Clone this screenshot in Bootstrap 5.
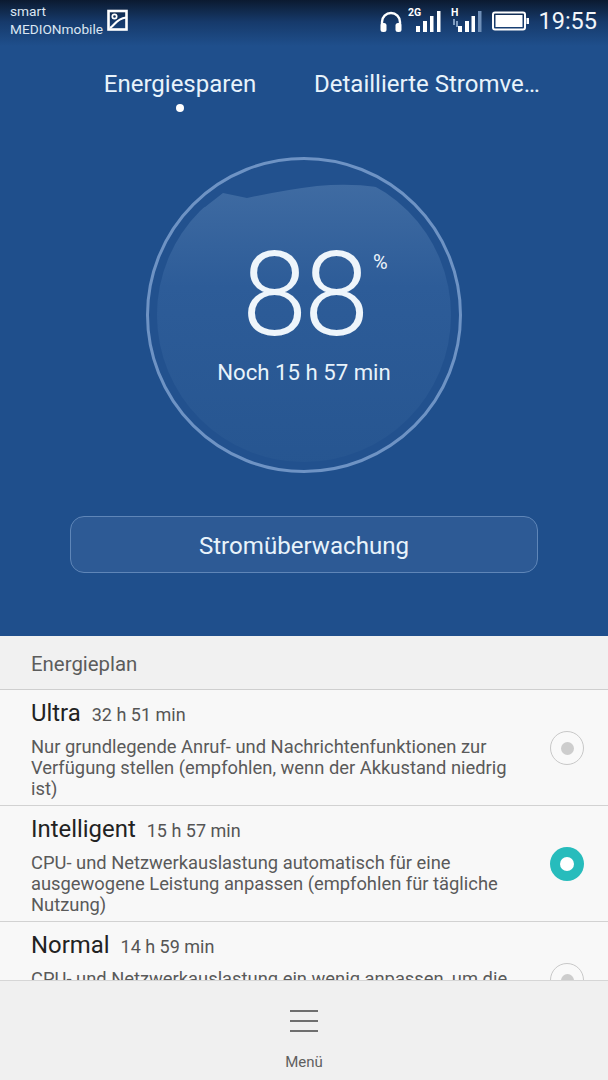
<!DOCTYPE html>
<html lang="de">
<head>
<meta charset="utf-8">
<title>Energiesparen</title>
<link href="https://cdn.jsdelivr.net/npm/bootstrap@5.3.0/dist/css/bootstrap.min.css" rel="stylesheet">
<style>
html,body{margin:0;height:100%;}
body{font-family:Roboto,"Liberation Sans",sans-serif;background:#f6f6f6;}
.phone-page{width:608px;height:1080px;overflow:hidden;}
.blue-top{height:636px;background:linear-gradient(to bottom,#0b1a30 0,#163a6b 22px,#1f4f8c 46px,#1f4f8c 100%);color:#e8f3fb;flex:none;}
.status-row{height:45px;padding:0 11px 0 10px;}
.carrier{font-size:13.7px;line-height:18px;padding-top:2px;color:#dbe6f2;}
.status-time{font-size:23.5px;line-height:24px;color:#f2f6fa;margin:9px 0 0 8px;}
.tab-row{height:69px;padding-top:25px;}
.tab-one{position:relative;width:304px;font-size:24px;line-height:28px;text-align:center;padding-left:56px;}
.tab-two{font-size:24px;line-height:28px;padding-left:10px;white-space:nowrap;}
.tab-dot{position:absolute;left:176px;top:34px;width:8px;height:8px;border-radius:50%;background:#fff;}
.dial{position:relative;width:320px;height:320px;margin:42px auto 0;}
.dial svg{display:block;}
.dial-num{position:absolute;left:0;right:0;top:79px;text-align:center;font-size:117px;line-height:120px;font-weight:300;letter-spacing:-3px;color:#eef5fb;}
.dial-pct{position:absolute;left:229px;top:95px;font-size:20px;line-height:22px;color:#eef5fb;}
.dial-left{position:absolute;left:0;right:0;top:202px;text-align:center;font-size:22.2px;line-height:28px;color:#e8f3fb;}
.monitor-btn{display:block;width:468px;height:57px;margin:40px auto 0;border:1px solid #5f86b8;border-radius:14px;background:#2d5a95;color:#e8f3fb;font-size:24.1px;line-height:59px;padding:0;text-align:center;}
.plan-head{height:54px;background:#f1f1f1;border-bottom:1px solid #cfcfcf;padding:0 31px;font-size:20.4px;line-height:57px;color:#5c5c5c;flex:none;}
.plan-list{flex:1 1 0;overflow:hidden;min-height:0;background:#f8f8f8;}
.plan-row{height:116px;border-bottom:1px solid #d2d2d2;padding:8px 24px 0 31px;}
.plan-title{line-height:30px;white-space:nowrap;}
.plan-name{font-size:23.9px;color:#222;}
.plan-time{font-size:18px;color:#555;margin-left:11px;}
.plan-desc{font-size:18.35px;line-height:21px;color:#5a5a5a;margin-top:5px;width:490px;}
.radio-off,.radio-on{width:34px;height:34px;border-radius:50%;flex:none;display:flex;align-items:center;justify-content:center;margin-top:33px;}
.radio-off{border:1px solid #c8c8c8;background:#f9f9f9;}
.radio-off i{display:block;width:13px;height:13px;border-radius:50%;background:#cdcdcd;}
.radio-on{background:#27bcbc;}
.radio-on i{display:block;width:14px;height:14px;border-radius:50%;background:#fff;}
.foot-bar{height:100px;background:#f0f0f0;border-top:1px solid #d6d6d6;flex:none;text-align:center;}
.menu-lines{display:block;margin:28px auto 0;}
.menu-word{font-size:15px;line-height:20px;color:#5f5f5f;margin-top:19px;}
.ic-head{margin:10px 0 0 0;}
.ic-sig2{margin:5px 0 0 5px;}
.ic-sigh{margin:5px 0 0 9px;}
.ic-bat{margin:11px 0 0 10px;}
</style>
</head>
<body>
<div class="phone-page d-flex flex-column">
  <section class="blue-top">
    <div class="status-row d-flex align-items-start justify-content-between">
      <div class="d-flex">
        <div class="carrier">smart<br>MEDIONmobile</div>
        <svg class="ms-1 mt-2" width="22" height="23" viewBox="0 0 22 23" fill="none" stroke="#fff"><rect x="1.5" y="3" width="18" height="18.5" stroke-width="2.6"/><circle cx="7.5" cy="8.5" r="2.2" stroke-width="1.7"/><path d="M3 20 C8 17 9 11 19 9.5" stroke-width="2.1"/></svg>
      </div>
      <div class="d-flex align-items-start">
        <svg class="ic-head" width="24" height="24" viewBox="0 0 24 24" fill="none"><path d="M3 15 V12 a9 9 0 0 1 18 0 V15" stroke="#fff" stroke-width="2.4"/><rect x="1.5" y="13" width="6" height="9" rx="2.5" fill="#fff"/><rect x="16.5" y="13" width="6" height="9" rx="2.5" fill="#fff"/></svg>
        <svg class="ic-sig2" width="34" height="27" viewBox="0 0 34 27"><text x="0" y="11" font-family="Roboto" font-weight="700" font-size="10.5" fill="#fff">2G</text><rect x="8" y="21" width="4" height="6" fill="#fff"/><rect x="15" y="16" width="4" height="11" fill="#fff"/><rect x="22" y="11" width="3.5" height="16" fill="#fff"/><rect x="29" y="6" width="3.5" height="21" fill="#fff"/></svg>
        <svg class="ic-sigh" width="31" height="27" viewBox="0 0 31 27"><text x="0" y="11" font-family="Roboto" font-weight="700" font-size="10.5" fill="#fff">H</text><path d="M3 14v6M6 22v-6" stroke="#7f9cc0" stroke-width="2"/><rect x="7" y="21" width="4" height="6" fill="#fff"/><rect x="14" y="16" width="4" height="11" fill="#fff"/><rect x="20.5" y="11" width="3.5" height="16" fill="#fff"/><rect x="27" y="6" width="3.5" height="21" fill="#6f8fb8"/></svg>
        <svg class="ic-bat" width="38" height="20" viewBox="0 0 38 20"><rect x="1" y="1.5" width="32" height="17" rx="2" fill="none" stroke="#fff" stroke-width="2"/><rect x="3.5" y="4" width="27" height="12" fill="#fff"/><rect x="34.5" y="7" width="2.5" height="6" fill="#fff"/></svg>
        <div class="status-time">19:55</div>
      </div>
    </div>
    <div class="tab-row d-flex">
      <div class="tab-one">Energiesparen<span class="tab-dot"></span></div>
      <div class="tab-two">Detaillierte Stromve…</div>
    </div>
    <div class="dial">
      <svg width="320" height="320" viewBox="0 0 320 320">
        <defs>
          <linearGradient id="fillg" x1="0" y1="0" x2="0" y2="1"><stop offset="0" stop-color="#3f6ba2"/><stop offset=".35" stop-color="#2d5c98"/><stop offset="1" stop-color="#265590"/></linearGradient>
          <clipPath id="inner"><circle cx="160" cy="159" r="147"/></clipPath>
        </defs>
        <circle cx="160" cy="159" r="156.5" fill="#22518e" stroke="#6e93c4" stroke-width="3"/>
        <path clip-path="url(#inner)" d="M10 60 L61 51 L79 37 L103 42 Q140 34 173 30 Q205 27 233 31 L320 60 V320 H0 V60Z" fill="url(#fillg)"/>
      </svg>
      <div class="dial-num">88</div>
      <div class="dial-pct">%</div>
      <div class="dial-left">Noch 15 h 57 min</div>
    </div>
    <button type="button" class="btn monitor-btn">Stromüberwachung</button>
  </section>
  <div class="plan-head">Energieplan</div>
  <div class="plan-list">
    <div class="plan-row d-flex justify-content-between">
      <div>
        <div class="plan-title"><span class="plan-name">Ultra</span><span class="plan-time">32 h 51 min</span></div>
        <div class="plan-desc">Nur grundlegende Anruf- und Nachrichtenfunktionen zur Verfügung stellen (empfohlen, wenn der Akkustand niedrig ist)</div>
      </div>
      <span class="radio-off"><i></i></span>
    </div>
    <div class="plan-row d-flex justify-content-between">
      <div>
        <div class="plan-title"><span class="plan-name">Intelligent</span><span class="plan-time">15 h 57 min</span></div>
        <div class="plan-desc">CPU- und Netzwerkauslastung automatisch für eine ausgewogene Leistung anpassen (empfohlen für tägliche Nutzung)</div>
      </div>
      <span class="radio-on"><i></i></span>
    </div>
    <div class="plan-row d-flex justify-content-between">
      <div>
        <div class="plan-title"><span class="plan-name">Normal</span><span class="plan-time">14 h 59 min</span></div>
        <div class="plan-desc">CPU- und Netzwerkauslastung ein wenig anpassen, um die Leistung zu erhöhen</div>
      </div>
      <span class="radio-off"><i></i></span>
    </div>
  </div>
  <footer class="foot-bar">
    <svg class="menu-lines" width="28" height="24" viewBox="0 0 28 24"><path d="M0 2H28M0 12H28M0 22H28" stroke="#6f6f6f" stroke-width="2"/></svg>
    <div class="menu-word">Menü</div>
  </footer>
</div>
<script src="https://cdn.jsdelivr.net/npm/bootstrap@5.3.0/dist/js/bootstrap.bundle.min.js"></script>
</body>
</html>
